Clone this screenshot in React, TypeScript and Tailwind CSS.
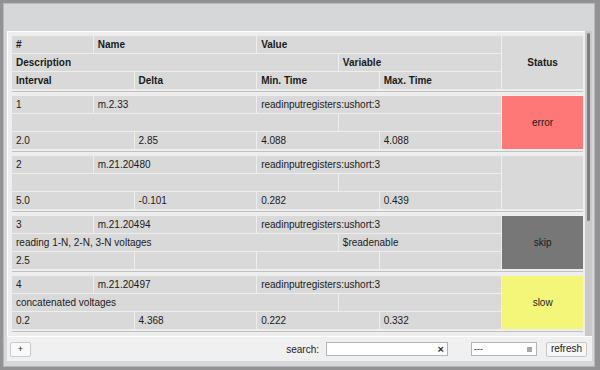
const ROWS = [
  {
    id: '1',
    name: 'm.2.33',
    value: 'readinputregisters:ushort:3',
    desc: '',
    variable: '',
    interval: '2.0',
    delta: '2.85',
    min: '4.088',
    max: '4.088',
    status: 'error',
  },
  {
    id: '2',
    name: 'm.21.20480',
    value: 'readinputregisters:ushort:3',
    desc: '',
    variable: '',
    interval: '5.0',
    delta: '-0.101',
    min: '0.282',
    max: '0.439',
    status: '',
  },
  {
    id: '3',
    name: 'm.21.20494',
    value: 'readinputregisters:ushort:3',
    desc: 'reading 1-N, 2-N, 3-N voltages',
    variable: '$readenable',
    interval: '2.5',
    delta: '',
    min: '',
    max: '',
    status: 'skip',
  },
  {
    id: '4',
    name: 'm.21.20497',
    value: 'readinputregisters:ushort:3',
    desc: 'concatenated voltages',
    variable: '',
    interval: '0.2',
    delta: '4.368',
    min: '0.222',
    max: '0.332',
    status: 'slow',
  },
]

const STATUS_BG: Record<string, string> = {
  error: 'bg-[#ff7878]',
  skip: 'bg-[#777777]',
  slow: 'bg-[#f4f67a]',
  '': 'bg-[#d9d9d9]',
}

const grid = 'grid grid-cols-[repeat(14,minmax(0,1fr))] auto-rows-[17px] gap-px'
const base = 'flex items-center truncate text-[10px] text-[#1a1a1a]'
const cell = `${base} bg-[#d9d9d9] pl-[4px]`

export default function App() {
  return (
    <div className="h-[370px] w-[600px] overflow-hidden bg-[#929294] pt-[3px] pl-[3px] font-['Liberation_Sans',Arial,sans-serif]">
      <div className="flex h-[364px] w-[592px] flex-col border border-[#b8b8ba] bg-[#d6d7d9] pt-[27px] pr-[2px] pb-[5px] pl-[3px]">
        <div className="flex h-[305px] min-h-0">
          <div className="flex-1 overflow-hidden border-t border-l border-white bg-[#eeeeee] pt-[4px] pr-[2px] pl-[4px]">
            <div className="border-b border-[#c2c2c2] pb-[2px]">
              <div className={grid}>
                <div className={`${cell} col-span-2 font-bold`}>#</div>
                <div className={`${cell} col-span-4 font-bold`}>Name</div>
                <div className={`${cell} col-span-6 font-bold`}>Value</div>
                <div className={`${base} col-span-2 row-span-3 justify-center bg-[#d9d9d9] font-bold`}>Status</div>
                <div className={`${cell} col-span-8 font-bold`}>Description</div>
                <div className={`${cell} col-span-4 font-bold`}>Variable</div>
                <div className={`${cell} col-span-3 font-bold`}>Interval</div>
                <div className={`${cell} col-span-3 font-bold`}>Delta</div>
                <div className={`${cell} col-span-3 font-bold`}>Min. Time</div>
                <div className={`${cell} col-span-3 font-bold`}>Max. Time</div>
              </div>
            </div>
            {ROWS.map((r) => (
              <div key={r.id} className="border-b border-[#c2c2c2] pt-[4px] pb-[2px]">
                <div className={grid}>
                  <div className={`${cell} col-span-2`}>{r.id}</div>
                  <div className={`${cell} col-span-4`}>{r.name}</div>
                  <div className={`${cell} col-span-6`}>{r.value}</div>
                  <div className={`${base} col-span-2 row-span-3 justify-center ${STATUS_BG[r.status]}`}>
                    {r.status}
                  </div>
                  <div className={`${cell} col-span-8`}>{r.desc}</div>
                  <div className={`${cell} col-span-4`}>{r.variable}</div>
                  <div className={`${cell} col-span-3`}>{r.interval}</div>
                  <div className={`${cell} col-span-3`}>{r.delta}</div>
                  <div className={`${cell} col-span-3`}>{r.min}</div>
                  <div className={`${cell} col-span-3`}>{r.max}</div>
                </div>
              </div>
            ))}
          </div>
          <div className="w-[7px] bg-[#c9c9cb] pt-[2px] pl-[2px]">
            <div className="h-[188px] w-[3px] rounded-full bg-[#7c7c7e]" />
          </div>
        </div>

        <div className="flex h-[25px] items-center border-t border-white bg-[#f0f0f0] pr-[5px] pl-[3px] text-[10px] text-[#222]">
          <button className="flex h-[15px] w-[21px] items-center justify-center rounded-[2px] border border-[#c9c9c9] bg-[#f9f9f9] text-[9px] leading-none">
            +
          </button>
          <div className="flex-1" />
          <span className="mr-[7px]">search:</span>
          <div className="flex h-[14px] w-[122px] items-center justify-end border border-[#b4b4b4] bg-white pr-[3px]">
            <span className="text-[11px] leading-none font-bold text-[#333]">×</span>
          </div>
          <div className="ml-[23px] flex h-[14px] w-[66px] items-center justify-between border border-[#b4b4b4] bg-white pr-[4px] pl-[2px]">
            <span className="text-[9px] leading-none">---</span>
            <span className="h-[5px] w-[5px] bg-[#a8a8a8]" />
          </div>
          <button className="ml-[9px] flex h-[15px] w-[41px] items-center justify-center rounded-[2px] border border-[#c6c6c6] bg-[#f7f7f7] text-[10px] leading-none">
            refresh
          </button>
        </div>
      </div>
    </div>
  )
}
